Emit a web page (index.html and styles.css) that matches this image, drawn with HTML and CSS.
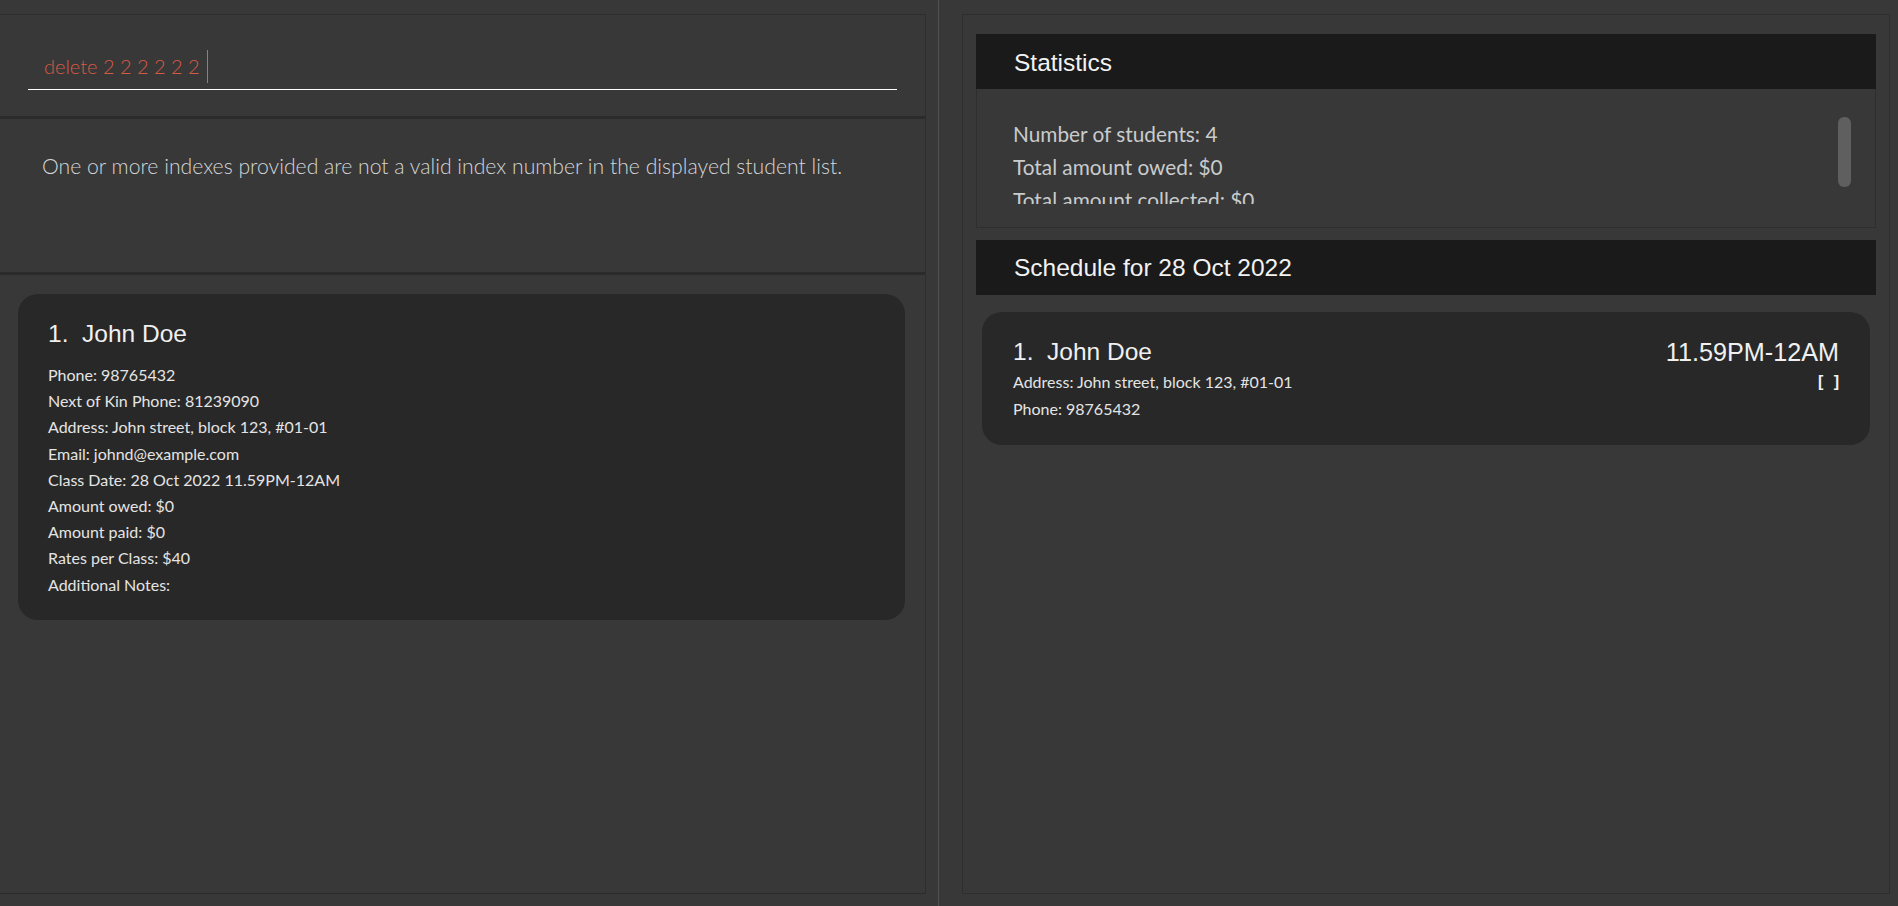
FILE: index.html
```html
<!DOCTYPE html>
<html lang="en">
<head>
<meta charset="utf-8">
<title>Tutor App</title>
<link rel="stylesheet" href="styles.css">
</head>
<body>
<div class="app">
  <section class="left">
    <div class="command-box">
      <div class="command-field">
        <span class="cmd-text">delete 2 2 2 2 2 2</span><span class="caret"></span>
      </div>
    </div>
    <div class="result-box">
      <p class="result-text">One or more indexes provided are not a valid index number in the displayed student list.</p>
    </div>
    <div class="list-box">
      <div class="card">
        <div class="card-title">1.&nbsp; John Doe</div>
        <div class="card-lines">
          <div class="line">Phone: 98765432</div>
          <div class="line">Next of Kin Phone: 81239090</div>
          <div class="line">Address: John street, block 123, #01-01</div>
          <div class="line">Email: johnd@example.com</div>
          <div class="line">Class Date: 28 Oct 2022 11.59PM-12AM</div>
          <div class="line">Amount owed: $0</div>
          <div class="line">Amount paid: $0</div>
          <div class="line">Rates per Class: $40</div>
          <div class="line">Additional Notes:</div>
        </div>
      </div>
    </div>
  </section>
  <div class="divider"></div>
  <section class="right">
    <div class="panel-header">Statistics</div>
    <div class="stats-body">
      <div class="stats-scroll">
        <div class="stat">Number of students: 4</div>
        <div class="stat">Total amount owed: $0</div>
        <div class="stat">Total amount collected: $0</div>
      </div>
      <div class="scroll-track"><div class="scroll-thumb"></div></div>
    </div>
    <div class="panel-header schedule-header">Schedule for 28 Oct 2022</div>
    <div class="schedule-list">
      <div class="sched-card">
        <div class="sched-main">
          <div class="card-title">1.&nbsp; John Doe</div>
          <div class="sched-line first">Address: John street, block 123, #01-01</div>
          <div class="sched-line">Phone: 98765432</div>
        </div>
        <div class="sched-side">
          <div class="sched-time">11.59PM-12AM</div>
          <div class="sched-check">[ ]</div>
        </div>
      </div>
    </div>
  </section>
</div>
</body>
</html>
```
FILE: styles.css
```css
html, body {
  margin: 0;
  padding: 0;
  width: 1898px;
  height: 906px;
  overflow: hidden;
  background: #383838;
  font-family: "Lato", "Open Sans", sans-serif;
}

.app {
  display: flex;
  height: 906px;
}

/* ---------- left column ---------- */
.left {
  width: 926px;
  height: 880px;
  margin-top: 14px;
  box-sizing: border-box;
  border-top: 1px solid #2e2e2e;
  border-right: 1px solid #2e2e2e;
  border-bottom: 1px solid #2b2b2b;
  display: flex;
  flex-direction: column;
}

.command-box {
  height: 104px;
  box-sizing: border-box;
  padding: 35px 28px 0 28px;
  border-bottom: 3px solid #2b2b2b;
  flex: none;
}

.command-field {
  height: 40px;
  box-sizing: border-box;
  border-bottom: 1px solid #ffffff;
  display: flex;
  align-items: flex-start;
  padding-left: 16px;
}

.cmd-text {
  color: #d65a44;
  font-weight: 300;
  font-size: 20px;
  line-height: 33px;
}

.caret {
  width: 1px;
  height: 33px;
  background: #d06651;
  margin-left: 7px;
}

.result-box {
  height: 156px;
  box-sizing: border-box;
  border-bottom: 3px solid #2b2b2b;
  padding: 35px 0 0 42px;
  flex: none;
}

.result-text {
  margin: 0;
  color: #d4d6d8;
  font-weight: 300;
  font-size: 21.2px;
  line-height: 25px;
}

.list-box {
  flex: 1;
  padding: 19px 20px 0 18px;
}

.card {
  height: 326px;
  box-sizing: border-box;
  background: #282828;
  border-radius: 20px;
  padding: 26px 30px 0 30px;
}

.card-title {
  font-family: "Liberation Sans", Arial, sans-serif;
  font-size: 24.5px;
  line-height: 28px;
  color: #f0f0f0;
}

.card-lines {
  margin-top: 14px;
}

.line {
  color: #e4e4e4;
  font-size: 16px;
  line-height: 26.2px;
}

/* ---------- divider ---------- */
.divider {
  width: 1px;
  background: #505050;
  margin-left: 12px;
  margin-right: 23px;
}

/* ---------- right column ---------- */
.right {
  width: 928px;
  height: 880px;
  margin-top: 14px;
  box-sizing: border-box;
  border: 1px solid #2e2e2e;
  padding: 19px 13px 0 13px;
}

.panel-header {
  height: 55px;
  background: #1a1a1a;
  color: #f2f2f2;
  font-family: "Liberation Sans", Arial, sans-serif;
  font-size: 24.5px;
  line-height: 57px;
  padding-left: 38px;
}

.stats-body {
  height: 139px;
  box-sizing: border-box;
  border: 1px solid #2e2e2e;
  border-top: none;
  padding: 28px 24px 0 36px;
  display: flex;
}

.stats-scroll {
  flex: 1;
  height: 87px;
  overflow: hidden;
}

.stat {
  color: #c9cbcd;
  font-size: 20.8px;
  line-height: 33px;
}

.scroll-track {
  width: 13px;
}

.scroll-thumb {
  height: 70px;
  background: #5f5f5f;
  border-radius: 6px;
}

.schedule-header {
  margin-top: 12px;
  line-height: 55px;
}

.schedule-list {
  padding: 17px 6px 0 6px;
}

.sched-card {
  height: 133px;
  box-sizing: border-box;
  background: #282828;
  border-radius: 20px;
  padding: 26px 31px 0 31px;
  display: flex;
  justify-content: space-between;
}

.sched-line {
  color: #e4e4e4;
  font-size: 16px;
  line-height: 26.5px;
}

.sched-line.first {
  margin-top: 3px;
}

.sched-side {
  display: flex;
  flex-direction: column;
  align-items: flex-end;
}

.sched-time {
  font-family: "Liberation Sans", Arial, sans-serif;
  font-size: 25.2px;
  line-height: 28px;
  color: #f0f0f0;
}

.sched-check {
  margin-top: 3px;
  font-family: "Liberation Sans", Arial, sans-serif;
  font-weight: bold;
  font-size: 16px;
  line-height: 26.5px;
  color: #f0f0f0;
  word-spacing: 6px;
}
```
